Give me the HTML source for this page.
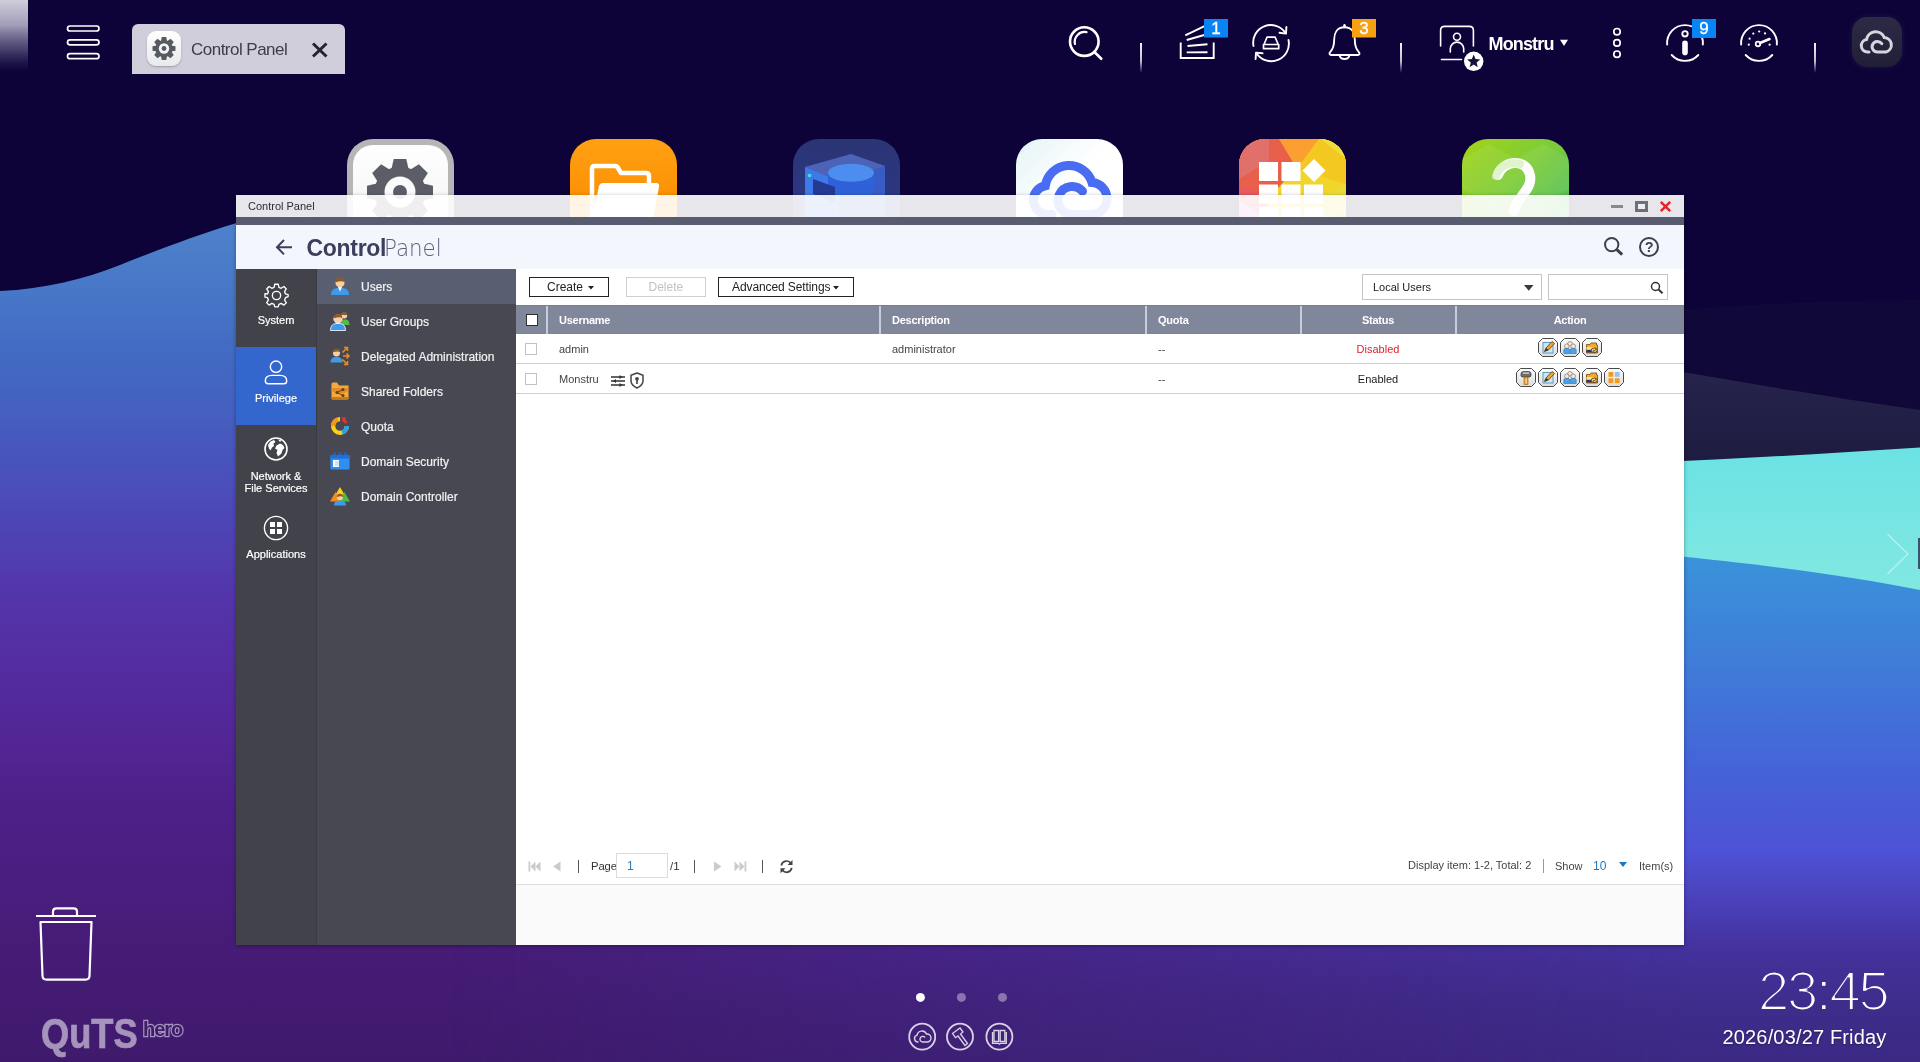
<!DOCTYPE html>
<html lang="en">
<head>
<meta charset="utf-8">
<title>Control Panel</title>
<style>
*{box-sizing:border-box;margin:0;padding:0}
html,body{width:1920px;height:1062px;overflow:hidden;background:#0d0338}
body{position:relative;will-change:transform;font-family:"Liberation Sans",sans-serif;color:#333;-webkit-font-smoothing:antialiased}
.abs{position:absolute}
.t{position:absolute;white-space:nowrap;line-height:1}
#bg{position:absolute;left:0;top:0;width:1920px;height:1062px}
/* ---------- top bar ---------- */
#tab{position:absolute;left:132px;top:24px;width:213px;height:50px;background:#d0cedb;border-radius:6px 6px 0 0}
#tabicon{position:absolute;left:15px;top:7px;width:34px;height:35px;border-radius:9px;background:linear-gradient(#ffffff,#e9e9ec);box-shadow:0 1px 2px rgba(0,0,0,.25)}
.sep{position:absolute;width:2px;height:30px;top:43px;background:linear-gradient(rgba(255,255,255,.95),rgba(255,255,255,.75) 60%,rgba(255,255,255,0))}
.badge{position:absolute;width:24px;height:19px;top:19px;color:#fff;font-size:14px;line-height:19px;text-align:center;-webkit-text-stroke:.35px #fff}
/* ---------- desktop icons ---------- */
.dicon{position:absolute;top:139px;width:107px;height:107px;border-radius:26px;overflow:hidden}
/* ---------- window ---------- */
#win{position:absolute;left:236px;top:195px;width:1448px;height:750px;box-shadow:0 1px 4px rgba(0,0,0,.35)}
#wtitle{position:absolute;left:0;top:0;width:1448px;height:22px;background:rgba(255,255,255,.9)}
#wband{position:absolute;left:0;top:22px;width:1448px;height:8px;background:#595b71}
#whead{position:absolute;left:0;top:30px;width:1448px;height:44px;background:#f3f6fd}
#side1{position:absolute;left:0;top:74px;width:80px;height:676px;background:#42424a}
#side1sep{position:absolute;left:80px;top:74px;width:1px;height:676px;background:#3a3a43}
#side2{position:absolute;left:81px;top:74px;width:199px;height:676px;background:#484852}
#main{position:absolute;left:280px;top:74px;width:1168px;height:676px;background:#fff}
.s1txt{position:absolute;left:0;width:80px;text-align:center;color:#fff;font-size:11px;line-height:12px;white-space:nowrap;-webkit-text-stroke:.2px #fff}
.s2item{position:absolute;left:0;width:199px;height:35px}
.s2item span{position:absolute;left:44px;top:11px;font-size:12px;line-height:14px;color:#f2f2f2;white-space:nowrap;-webkit-text-stroke:.2px #f2f2f2}
.s2item svg{position:absolute;left:13px;top:7px}
.btn{position:absolute;top:8px;height:20px;border:1px solid #222;font-size:12px;line-height:18px;color:#222;white-space:nowrap;background:#fff}
.th{position:absolute;top:-1px;height:29px;color:#fff;font-weight:bold;font-size:11px;line-height:31px;white-space:nowrap;letter-spacing:-.25px}
.thsep{position:absolute;top:0;width:2px;height:28px;background:#c6ccde}
.row{position:absolute;left:0;width:1168px;height:30px;border-bottom:1px solid #cfcfcf}
.cell{position:absolute;top:0;font-size:11px;line-height:31px;color:#444;white-space:nowrap}
.cb{position:absolute;width:12px;height:12px;border:1px solid #c0c0c0;background:#fff}
.ab{position:absolute;top:4px;width:20px;height:19px}
</style>
</head>
<body>
<svg id="bg" width="1920" height="1062" viewBox="0 0 1920 1062">
<defs>
<linearGradient id="gL" x1="0" y1="225" x2="0" y2="1062" gradientUnits="userSpaceOnUse">
<stop offset="0" stop-color="#4f81cb"/><stop offset=".08" stop-color="#4777c7"/><stop offset=".15" stop-color="#426bc3"/><stop offset=".22" stop-color="#4560c0"/><stop offset=".33" stop-color="#4c4ab9"/><stop offset=".45" stop-color="#5434a9"/><stop offset=".58" stop-color="#53289a"/><stop offset=".7" stop-color="#4d2088"/><stop offset=".85" stop-color="#471c78"/><stop offset="1" stop-color="#3f1a6c"/>
</linearGradient>
<linearGradient id="gR" x1="0" y1="557" x2="0" y2="1062" gradientUnits="userSpaceOnUse">
<stop offset="0" stop-color="#3a93da"/><stop offset=".12" stop-color="#3d86d9"/><stop offset=".3" stop-color="#4272d8"/><stop offset=".42" stop-color="#4563d8"/><stop offset=".58" stop-color="#4e52d6"/><stop offset=".68" stop-color="#4a41ba"/><stop offset=".78" stop-color="#44319c"/><stop offset=".88" stop-color="#3f2d8c"/><stop offset="1" stop-color="#3c2984"/>
</linearGradient>
<linearGradient id="gRm" x1="450" y1="0" x2="1690" y2="0" gradientUnits="userSpaceOnUse">
<stop offset="0" stop-color="#fff" stop-opacity="0"/><stop offset=".5" stop-color="#fff" stop-opacity=".5"/><stop offset="1" stop-color="#fff" stop-opacity="1"/>
</linearGradient>
<mask id="mR"><rect x="0" y="0" width="1920" height="1062" fill="url(#gRm)"/></mask>
<linearGradient id="gT" x1="0" y1="445" x2="0" y2="595" gradientUnits="userSpaceOnUse">
<stop offset="0" stop-color="#6be2e5"/><stop offset="1" stop-color="#82e8e1"/>
</linearGradient>
<linearGradient id="gD" x1="0" y1="370" x2="0" y2="465" gradientUnits="userSpaceOnUse">
<stop offset="0" stop-color="#27244d"/><stop offset="1" stop-color="#1e1b40"/>
</linearGradient>
<linearGradient id="gC" x1="0" y1="0" x2="0" y2="72" gradientUnits="userSpaceOnUse">
<stop offset="0" stop-color="#d0cddb"/><stop offset=".35" stop-color="#aaa6c0" stop-opacity=".95"/><stop offset=".7" stop-color="#6a668e" stop-opacity=".6"/><stop offset="1" stop-color="#3c3868" stop-opacity="0"/>
</linearGradient>
<linearGradient id="gTop" x1="0" y1="0" x2="0" y2="300" gradientUnits="userSpaceOnUse">
<stop offset="0" stop-color="#0d0638"/><stop offset="1" stop-color="#0e0439"/>
</linearGradient>
</defs>
<rect width="1920" height="1062" fill="#0d0338"/>
<path d="M1920,300 L1920,420 L1100,420 Q1500,300 1920,300Z" fill="#100839"/>
<!-- left wave + lower body -->
<path d="M0,291 C45,289 85,279 120,265 C155,251 200,234 236,223.300000 C270,213.500000 330,212 420,232 C800,330 1200,400 1920,420 L1920,1062 L0,1062Z" fill="url(#gL)"/>
<!-- right: dark band, teal, blue -->
<path d="M1300,300 C1500,340 1700,378 1920,410 L1920,600 L1300,600Z" fill="url(#gD)"/>
<path d="M1300,475 C1500,470 1700,462 1920,447.500000 L1920,593 C1690,548 1300,523 400,503Z" fill="url(#gT)"/>
<g mask="url(#mR)"><path d="M400,500 C1300,520 1690,545 1920,590 L1920,1062 L400,1062Z" fill="url(#gR)"/></g>
<rect x="0" y="0" width="28" height="72" fill="url(#gC)"/>
<!-- next arrow -->
<polyline points="1887.500000,534 1908,554 1887.500000,574" fill="none" stroke="#fff" stroke-opacity=".45" stroke-width="1.300000"/>
<rect x="1918" y="538" width="2" height="31" fill="#1a1440" fill-opacity=".7"/>
</svg>

<div id="tab"><div id="tabicon"><svg width="34" height="35" viewBox="0 0 34 35"><g transform="translate(17,17.5)" fill="#565a61"><path d="M-2.300000,-11.500000 L2.300000,-11.500000 L3,-7 L-3,-7Z"/><path d="M-2.300000,-11.500000 L2.300000,-11.500000 L3,-7 L-3,-7Z" transform="rotate(45)"/><path d="M-2.300000,-11.500000 L2.300000,-11.500000 L3,-7 L-3,-7Z" transform="rotate(90)"/><path d="M-2.300000,-11.500000 L2.300000,-11.500000 L3,-7 L-3,-7Z" transform="rotate(135)"/><path d="M-2.300000,-11.500000 L2.300000,-11.500000 L3,-7 L-3,-7Z" transform="rotate(180)"/><path d="M-2.300000,-11.500000 L2.300000,-11.500000 L3,-7 L-3,-7Z" transform="rotate(225)"/><path d="M-2.300000,-11.500000 L2.300000,-11.500000 L3,-7 L-3,-7Z" transform="rotate(270)"/><path d="M-2.300000,-11.500000 L2.300000,-11.500000 L3,-7 L-3,-7Z" transform="rotate(315)"/><circle r="8.600000"/><circle r="5.200000" fill="#f4f4f6"/><circle r="2.400000"/></g></svg></div>
<span class="t" style="left:59px;top:17px;font-size:17px;color:#3b3d49;letter-spacing:-.52px">Control Panel</span>
<svg class="abs" style="left:179px;top:17px" width="18" height="18" viewBox="0 0 18 18"><path d="M2,2.500000 L15.500000,15.500000 M15.500000,2.500000 L2,15.500000" stroke="#24242c" stroke-width="3" stroke-linecap="butt"/></svg>
</div>
<svg class="abs" style="left:0;top:0" width="1920" height="100" viewBox="0 0 1920 100" fill="none" stroke="#fff" stroke-linecap="round" stroke-linejoin="round">
<!-- hamburger -->
<g stroke-width="1.700000"><rect x="67.500000" y="26" width="31.500000" height="5" rx="2.500000"/><rect x="67.500000" y="39.800000" width="31.500000" height="5" rx="2.500000"/><rect x="67.500000" y="53.700000" width="31.500000" height="5" rx="2.500000"/></g>
<!-- search -->
<g stroke-width="2.600000"><circle cx="1084.300000" cy="41.600000" r="14.300000"/><path d="M1094.700000,52.300000 L1101.300000,58.800000"/><path d="M1075,44 A9.800000,9.800000 0 0 1 1086.500000,32.200000" stroke-width="2.200000"/></g>
<!-- tasks -->
<g stroke-width="1.900000" stroke-linecap="butt" stroke-linejoin="miter"><path d="M1180.700000,42.500000 V58 H1213.700000 V42.500000"/><path d="M1186.700000,52.400000 L1207.500000,52.200000 M1187.500000,46 L1207.500000,44.200000 M1186.700000,40 L1206,34.500000 M1185.300000,35.300000 L1205,25.800000"/></g>
<rect x="1204" y="19" width="24" height="18.500000" fill="#0a84f4" stroke="none"/>
<!-- sync -->
<g stroke-width="1.900000"><path d="M1253.500000,46 A17.600000,17.600000 0 0 1 1285.500000,33"/><path d="M1279.500000,32.800000 L1286,33.600000 L1286.400000,27"/><path d="M1288.500000,40 A17.600000,17.600000 0 0 1 1256.500000,53.200000"/><path d="M1262.500000,53.300000 L1256,52.600000 L1255.600000,59"/><path d="M1264,44.500000 L1267,37.200000 H1275.200000 L1278.200000,44.500000 M1263.500000,44.500000 H1278.700000 V48.700000 H1263.500000Z" stroke-width="1.700000"/></g>
<!-- bell -->
<g stroke-width="1.900000"><path d="M1344.500000,27.300000 C1337,27.300000 1334.200000,33 1334.200000,39.500000 C1334.200000,47 1332.500000,49.800000 1330,52.300000 C1329,53.500000 1329.600000,55 1331.200000,55 L1357.800000,55 C1359.400000,55 1360,53.500000 1359,52.300000 C1356.500000,49.800000 1354.800000,47 1354.800000,39.500000 C1354.800000,33 1352,27.300000 1344.500000,27.300000Z"/><path d="M1339.600000,55.500000 A5,4.300000 0 0 0 1349.400000,55.500000"/><path d="M1344.500000,27 V25.200000" stroke-width="2.400000"/></g>
<rect x="1352" y="19" width="24" height="18.500000" fill="#f7a111" stroke="none"/>
<!-- user -->
<g stroke-width="1.600000"><path d="M1440.600000,46 V30.500000 Q1440.600000,26.400000 1444.700000,26.400000 H1469.300000 Q1473.400000,26.400000 1473.400000,30.500000 V46"/><path d="M1441.500000,59.500000 H1461.500000"/><circle cx="1457" cy="36.700000" r="3.500000"/><path d="M1450.300000,52 V48.800000 A6.700000,6.700000 0 0 1 1463.700000,48.800000 V52"/></g>
<circle cx="1473.700000" cy="61.300000" r="9.700000" fill="#fff" stroke="none"/>
<path d="M1473.700000,54.600000 L1475.500000,59 L1480.300000,59.400000 L1476.600000,62.500000 L1477.800000,67.200000 L1473.700000,64.600000 L1469.600000,67.200000 L1470.800000,62.500000 L1467.100000,59.400000 L1471.900000,59Z" fill="#17123c" stroke="none"/>
<path d="M1560,39.700000 H1568 L1564,45.900000Z" fill="#fff" stroke="none"/>
<!-- dots -->
<g stroke-width="1.700000"><circle cx="1617" cy="31.700000" r="3.200000"/><circle cx="1617" cy="42.900000" r="3.200000"/><circle cx="1617" cy="54.200000" r="3.200000"/></g>
<!-- info -->
<g stroke-width="1.900000"><path d="M1667.160000,44.500000 A17.900000,17.900000 0 1 1 1702.840000,44.500000"/><path d="M1671.700000,55 A17.900000,17.900000 0 0 0 1698.300000,55"/><circle cx="1685" cy="33.800000" r="2.700000" stroke-width="1.900000"/><rect x="1682.200000" y="40.600000" width="5.600000" height="14.600000" rx="2.800000" fill="#fff" stroke="none"/></g>
<rect x="1692" y="19" width="24" height="19" fill="#0a84f4" stroke="none"/>
<!-- gauge -->
<g stroke-width="1.900000"><path d="M1741.160000,44.500000 A17.900000,17.900000 0 1 1 1776.840000,44.500000"/><path d="M1745.700000,55 A17.900000,17.900000 0 0 0 1772.300000,55"/><circle cx="1758" cy="44" r="2.300000" stroke-width="1.700000"/><path d="M1760,43 L1769.500000,39" stroke-width="2.600000"/></g>
<g fill="#fff" stroke="none"><circle cx="1748.800000" cy="44.700000" r="1.100000"/><circle cx="1749.600000" cy="38.700000" r="1.100000"/><circle cx="1753.300000" cy="33.600000" r="1.100000"/><circle cx="1759.200000" cy="31.500000" r="1.100000"/><circle cx="1765" cy="33.400000" r="1.100000"/><circle cx="1769.600000" cy="44.700000" r="1.100000"/></g>
</svg>
<span class="badge" style="left:1204px;font-size:17px">1</span>
<span class="badge" style="left:1352px;font-size:17px">3</span>
<span class="badge" style="left:1692px;font-size:17px">9</span>
<div class="sep" style="left:1140px"></div><div class="sep" style="left:1400px"></div><div class="sep" style="left:1814px"></div>
<span class="t" style="left:1488.5px;top:34.5px;font-size:18px;font-weight:bold;color:#fff;letter-spacing:-.85px">Monstru</span>
<div class="abs" style="left:1852px;top:17px;width:50px;height:50px;border-radius:15px;background:linear-gradient(#2d2a45,#211e38);box-shadow:0 0 6px rgba(60,55,95,.35)"><svg width="50" height="50" viewBox="0 0 50 50" fill="none" stroke="#d6d5de" stroke-width="3" stroke-linecap="round"><path d="M17,35 H15.500000 A6.300000,6.300000 0 0 1 14.500000,22.500000 A9.300000,9.300000 0 0 1 32.300000,20.500000 A7.400000,7.400000 0 0 1 34,35 H25.500000 A5.300000,5.300000 0 1 1 29.800000,26.700000"/></svg></div>

<!-- Control Panel icon -->
<div class="dicon" style="left:347px;background:#b6b6b6"><div class="abs" style="left:6px;top:6px;width:95px;height:95px;border-radius:20px;background:linear-gradient(#ffffff,#f1f1f2)"></div>
<svg class="abs" style="left:0;top:0" width="107" height="107" viewBox="0 0 107 107"><g transform="translate(53,53)" fill="#5b5e67"><path d="M-6.300000,-33 L6.300000,-33 L9,-21 L-9,-21Z"/><path d="M-6.300000,-33 L6.300000,-33 L9,-21 L-9,-21Z" transform="rotate(45)"/><path d="M-6.300000,-33 L6.300000,-33 L9,-21 L-9,-21Z" transform="rotate(90)"/><path d="M-6.300000,-33 L6.300000,-33 L9,-21 L-9,-21Z" transform="rotate(135)"/><path d="M-6.300000,-33 L6.300000,-33 L9,-21 L-9,-21Z" transform="rotate(180)"/><path d="M-6.300000,-33 L6.300000,-33 L9,-21 L-9,-21Z" transform="rotate(225)"/><path d="M-6.300000,-33 L6.300000,-33 L9,-21 L-9,-21Z" transform="rotate(270)"/><path d="M-6.300000,-33 L6.300000,-33 L9,-21 L-9,-21Z" transform="rotate(315)"/><circle r="25.500000"/><circle r="15.500000" fill="#fafafa"/><circle r="7"/></g></svg></div>
<!-- File Station -->
<div class="dicon" style="left:570px;background:linear-gradient(#ffa012,#fb8d02 70%,#f68400)">
<svg class="abs" style="left:0;top:0" width="107" height="107" viewBox="0 0 107 107"><path d="M22,78 V30 Q22,27 25,27 H45 Q47,27 48,29 L51,34 H76 Q79,34 79,37 V44" fill="none" stroke="#fff" stroke-width="4.500000" stroke-linejoin="round"/><path d="M33,44 H86 Q90,44 89,48 L83,80 Q82,83 79,83 H24 Q21,83 22,80 L29,47 Q30,44 33,44Z" fill="#fff"/></svg></div>
<!-- Storage -->
<div class="dicon" style="left:793px;background:linear-gradient(#2b3474,#2a3a8e)">
<svg class="abs" style="left:0;top:0" width="107" height="107" viewBox="0 0 107 107"><path d="M12,28 L58,15 L92,27 L92,90 L46,100 L12,88Z" fill="#4a6bd0" fill-opacity=".45"/><path d="M12,28 L46,42 L46,100 L12,88Z" fill="#3f78e8"/><path d="M46,42 L92,27 L92,90 L46,100Z" fill="#3a5fd0" fill-opacity=".8"/><path d="M12,28 L58,15 L92,27 L46,42Z" fill="#6d84d8" fill-opacity=".4"/><ellipse cx="58" cy="50" rx="23" ry="9.500000" fill="#2f62d8"/><rect x="35" y="34" width="46" height="16" fill="#2f62d8"/><ellipse cx="58" cy="33.800000" rx="23" ry="9" fill="#4d8df0"/><path d="M20,40 L42,48 L42,64 L20,55Z" fill="#243a90"/><circle cx="16.500000" cy="36.500000" r="1.800000" fill="#3fe8d0"/></svg></div>
<!-- myQNAPcloud -->
<div class="dicon" style="left:1016px;background:linear-gradient(135deg,#e4f4f6,#ffffff 45%,#ffffff)">
<svg class="abs" style="left:0;top:0" width="107" height="107" viewBox="0 0 107 107" fill="none" stroke="#4a6cf2" stroke-width="9" stroke-linecap="round"><path d="M36,75.500000 H32 A14.500000,14.500000 0 0 1 29.300000,46.750000 A24,24 0 0 1 75.970000,43.530000 A16,16 0 0 1 75,75.500000 H56 A14,14 0 1 1 66.500000,52.200000"/></svg></div>
<!-- App Center -->
<div class="dicon" style="left:1239px;background:#f0d628">
<svg class="abs" style="left:0;top:0" width="107" height="107" viewBox="0 0 107 107"><rect width="107" height="107" fill="#f2d52a"/><path d="M0,0 H40 L62,22 L30,60 L0,50Z" fill="#e8604c"/><path d="M0,0 H30 L30,22 L0,40Z" fill="#e2706a"/><path d="M40,0 H80 L58,30Z" fill="#fba030"/><path d="M80,0 H107 V45 L58,30Z" fill="#f3c820"/><path d="M82,0 H107 V20Z" fill="#eede3c"/><path d="M0,45 L30,60 L20,107 H0Z" fill="#e85a60"/><path d="M0,62 L22,75 L18,107 H0Z" fill="#e07ad0"/><path d="M80,60 L107,45 V107 H75Z" fill="#e8dc3a"/><path d="M90,80 L107,70 V107 H85Z" fill="#b8d850"/>
<g fill="#fff"><rect x="20" y="23" width="19" height="19"/><rect x="42.500000" y="23" width="19" height="19"/><rect x="20" y="45.500000" width="19" height="19"/><rect x="42.500000" y="45.500000" width="19" height="19"/><rect x="65" y="45.500000" width="19" height="19"/><rect x="20" y="68" width="19" height="19"/><rect x="42.500000" y="68" width="19" height="19"/><rect x="65" y="68" width="19" height="19"/><path d="M75,20 L86.500000,31.500000 L75,43 L63.500000,31.500000Z"/></g></svg></div>
<!-- Help -->
<div class="dicon" style="left:1462px;background:linear-gradient(135deg,#a4d418,#7ccc38 45%,#3cb86c)">
<svg class="abs" style="left:0;top:0" width="107" height="107" viewBox="0 0 107 107"><g fill="#fff" fill-opacity=".07"><path d="M0,20 L27,5 L54,20 L54,50 L27,65 L0,50Z"/><path d="M54,20 L81,5 L107,20 L107,50 L81,65 L54,50Z"/><path d="M27,65 L54,50 L81,65 L81,95 L54,107 L27,95Z"/></g><path d="M36,36 C40,22 64,18 68,36 C71,50 56,56 52,72" fill="none" stroke="#fff" stroke-width="10" stroke-linecap="round"/><path d="M34,37 C37,26 50,22 58,25" fill="none" stroke="#d8f0c0" stroke-width="8" stroke-linecap="round" stroke-opacity=".8"/></svg></div>

<div id="win">
<div id="wtitle"></div><div id="wband"></div><div id="whead"></div>
<span class="t" style="left:12px;top:6px;font-size:11px;color:#2b2b33">Control Panel</span>
<div class="abs" style="left:1375px;top:10px;width:12px;height:3px;background:#85888d"></div>
<div class="abs" style="left:1399px;top:6px;width:13px;height:11px;border:3px solid #6c7078;border-top-width:3px;background:rgba(255,255,255,.35)"></div>
<svg class="abs" style="left:1423px;top:5px" width="13" height="13" viewBox="0 0 13 13"><path d="M1.800000,1.800000 L11.200000,11.200000 M11.200000,1.800000 L1.800000,11.200000" stroke="#e8222b" stroke-width="2.500000"/></svg>
<!-- header -->
<svg class="abs" style="left:38px;top:42px" width="20" height="20" viewBox="0 0 20 20" fill="none" stroke="#3c3f5c" stroke-width="2"><path d="M18,10.200000 H3.500000 M10,3 L3,10.200000 L10,17.400000"/></svg>
<span class="t" id="hctl" style="left:70.5px;top:42px;font-size:23px;font-weight:bold;color:#3c3f5c;letter-spacing:-.3px">Control</span>
<span class="t" id="hpan" style="left:148px;top:42px;font-family:'DejaVu Sans','Liberation Sans',sans-serif;font-weight:200;font-size:23px;color:#5c5f78;transform:scaleX(.93);transform-origin:0 0">Panel</span>
<svg class="abs" style="left:1366px;top:40px" width="24" height="22" viewBox="0 0 24 22" fill="none" stroke="#3d4048"><circle cx="9.700000" cy="9.600000" r="6.700000" stroke-width="2"/><path d="M14.800000,14.600000 L20.200000,19.600000" stroke-width="3"/></svg>
<div class="abs" style="left:1403px;top:42px;width:20px;height:20px;border:2px solid #3d4048;border-radius:50%"></div>
<span class="t" style="left:1408.8px;top:45px;font-size:14.500000px;font-weight:bold;color:#3d4048">?</span>
<!-- sidebars -->
<div id="side1">
<div class="abs" style="left:0;top:78px;width:80px;height:78px;background:#3367cd"></div>
<svg class="abs" style="left:27.5px;top:13.5px" width="25" height="25" viewBox="0 0 26 26" fill="none" stroke="#fff" stroke-width="1.400000" stroke-linejoin="round"><path d="M11.200000,1.500000 H14.800000 L15.500000,4.700000 L17.900000,5.700000 L20.700000,3.900000 L23.200000,6.400000 L21.400000,9.200000 L22.400000,11.600000 L25.100000,12.300000 V14.300000 L22.400000,15.500000 L21.400000,17.900000 L23.200000,20.700000 L20.700000,23.200000 L17.900000,21.400000 L15.500000,22.400000 L14.800000,25 H11.200000 L10.500000,22.400000 L8.100000,21.400000 L5.300000,23.200000 L2.800000,20.700000 L4.600000,17.900000 L3.600000,15.500000 L1,14.800000 V11.200000 L3.600000,11.600000 L4.600000,9.200000 L2.800000,6.400000 L5.300000,3.900000 L8.100000,5.700000 L10.500000,4.700000Z" transform="translate(0,-.2)"/><circle cx="13" cy="13" r="4.300000"/></svg>
<span class="s1txt" style="top:45px">System</span>
<svg class="abs" style="left:28px;top:91px" width="24" height="25" viewBox="0 0 24 25" fill="none" stroke="#fff" stroke-width="1.400000"><circle cx="12" cy="6.700000" r="5.700000"/><path d="M8,15.400000 H16 Q22.700000,15.400000 22.700000,21 Q22.700000,23.800000 19.800000,23.800000 H4.200000 Q1.300000,23.800000 1.300000,21 Q1.300000,15.400000 8,15.400000Z"/></svg>
<span class="s1txt" style="top:123px">Privilege</span>
<svg class="abs" style="left:28px;top:168px" width="24" height="24" viewBox="0 0 24 24"><circle cx="12" cy="12" r="11" fill="none" stroke="#fff" stroke-width="1.600000"/><path d="M6.500000,4.500000 L10,3 L11.500000,5 L9.500000,6.500000 L10,9 L8,10.500000 L6.500000,13.500000 L5,11.500000 L4,8 Z M12.500000,8.500000 L16,6.500000 L19,8 L20.500000,11 L18.500000,13 L17.500000,16.500000 L14,19.500000 L12.500000,16 L13.500000,13 L11,11.500000Z M14,2.500000 L17.500000,3.500000 L16,5 Z" fill="#fff"/></svg>
<span class="s1txt" style="top:201px">Network &amp;<br>File Services</span>
<svg class="abs" style="left:27px;top:246px" width="26" height="26" viewBox="0 0 26 26"><circle cx="13" cy="13" r="11.600000" fill="none" stroke="#fff" stroke-width="1.400000"/><g fill="#fff"><rect x="7" y="7" width="5" height="5"/><rect x="14" y="7" width="5" height="5"/><rect x="7" y="14" width="5" height="5"/><rect x="14" y="14" width="5" height="5"/></g></svg>
<span class="s1txt" style="top:279px">Applications</span>
</div>
<div id="side1sep"></div>
<div id="side2">
<div class="s2item" style="top:0;background:#585f70"><svg width="20" height="20" viewBox="0 0 20 20"><path d="M1,19 Q1,12.500000 7,12 H13 Q19,12.500000 19,19Z" fill="#3f9bea"/><path d="M8,11 H12 L10,15.500000Z" fill="#fff"/><circle cx="10" cy="6.800000" r="4.600000" fill="#f6cfa5"/><path d="M5.200000,6.500000 Q5,1.500000 10,1.500000 Q15,1.500000 14.800000,6.500000 Q12,3.800000 5.200000,6.500000Z" fill="#8b5a2b"/></svg><span>Users</span></div>
<div class="s2item" style="top:35px"><svg width="20" height="20" viewBox="0 0 20 20"><circle cx="14.300000" cy="4.500000" r="2.900000" fill="#f6cfa5"/><path d="M11.300000,4 Q11.500000,1 14.300000,1 Q17.200000,1 17.300000,4Z" fill="#8b5a2b"/><path d="M11,14 Q11,8.500000 15,8.300000 Q19.500000,8.500000 19.500000,14Z" fill="#57b947"/><path d="M.5,19.500000 Q.5,13 6,12.500000 H10 Q15.500000,13 15.500000,19.500000Z" fill="#3f9bea" stroke="#fff" stroke-width=".8"/><circle cx="8" cy="7.800000" r="4.200000" fill="#f6cfa5" stroke="#fff" stroke-width=".8"/><path d="M3.700000,7.400000 Q3.600000,3 8,3 Q12.400000,3 12.300000,7.400000 Q10,5 3.700000,7.400000Z" fill="#8b5a2b"/></svg><span>User Groups</span></div>
<div class="s2item" style="top:70px"><svg width="20" height="20" viewBox="0 0 20 20"><path d="M.5,16.500000 Q.5,11.500000 5,11 H8 Q12.500000,11.500000 12.500000,16.500000Z" fill="#3f9bea"/><circle cx="6.500000" cy="6.800000" r="3.600000" fill="#f6cfa5"/><path d="M2.800000,6.500000 Q2.700000,2.700000 6.500000,2.700000 Q10.300000,2.700000 10.200000,6.500000 Q8,4.500000 2.800000,6.500000Z" fill="#8b5a2b"/><g stroke="#f28a1e" stroke-width="1.500000" fill="none"><path d="M12.500000,6.500000 L17,2 M14,1.500000 H17.500000 V5"/><path d="M13,10 H19 M16.500000,7.500000 L19,10 L16.500000,12.500000"/><path d="M12.500000,13.500000 L17,18 M14,18.500000 H17.500000 V15"/></g></svg><span>Delegated Administration</span></div>
<div class="s2item" style="top:105px"><svg width="20" height="20" viewBox="0 0 20 20"><path d="M1.500000,3 Q1.500000,1.500000 3,1.500000 H7 L9,4.500000 H18.500000 V17 Q18.500000,18.500000 17,18.500000 H3 Q1.500000,18.500000 1.500000,17Z" fill="#f6a93b"/><path d="M1.500000,7 H18.500000 V10 Q14,12.500000 10,12.500000 Q6,12.500000 1.500000,10Z" fill="#e08e26"/><rect x="1.500000" y="16" width="17" height="2.500000" rx="1" fill="#c47a1e"/><g fill="#6b3d12"><circle cx="7" cy="11.500000" r="1.500000"/><circle cx="13" cy="8.500000" r="1.500000"/><circle cx="13" cy="14.500000" r="1.500000"/></g><path d="M7,11.500000 L13,8.500000 M7,11.500000 L13,14.500000" stroke="#6b3d12" stroke-width="1"/></svg><span>Shared Folders</span></div>
<div class="s2item" style="top:140px"><svg width="20" height="20" viewBox="0 0 20 20" fill="none" stroke-width="4.200000"><path d="M10,3.100000 A6.900000,6.900000 0 1 0 16.900000,10" stroke="#fdd114"/><path d="M3.100000,10 A6.900000,6.900000 0 0 1 8,3.400000" stroke="#f7941d"/><path d="M16.900000,10 A6.900000,6.900000 0 0 1 12,16.600000" stroke="#29a3e8"/><path d="M11,1 L16,1.500000 L15.500000,6.500000Z" fill="#e5322d" stroke="none"/><path d="M12.500000,3.500000 A6.900000,6.900000 0 0 1 16.300000,7" stroke="#e5322d" stroke-width="3"/></svg><span>Quota</span></div>
<div class="s2item" style="top:175px"><svg width="20" height="20" viewBox="0 0 20 20"><rect x="3" y="1.500000" width="3" height="4" fill="#1d62c4"/><rect x="8.500000" y="1.500000" width="3" height="4" fill="#1d62c4"/><rect x="14" y="1.500000" width="3" height="4" fill="#1d62c4"/><rect x=".5" y="4" width="19" height="14.500000" rx="1.200000" fill="#2f8ff2"/><rect x=".5" y="4" width="19" height="3.500000" fill="#1f6fd6"/><rect x="3" y="9" width="6" height="7" fill="#fff"/><rect x="5" y="10" width="4" height="5" fill="#cfe4fb"/></svg><span>Domain Security</span></div>
<div class="s2item" style="top:210px"><svg width="20" height="20" viewBox="0 0 20 20"><path d="M10,1 L15,9.500000 H5Z" fill="#fdd114"/><path d="M5.500000,6 L11,15.500000 H0Z" fill="#f58a1f"/><path d="M14.500000,6 L20,15.500000 H9Z" fill="#4dbb3c"/><path d="M4,19.500000 Q4,15 8,14.700000 H12 Q16,15 16,19.500000Z" fill="#3f9bea"/><circle cx="10" cy="11.200000" r="3" fill="#f6cfa5"/><path d="M6.900000,11 Q6.900000,7.800000 10,7.800000 Q13.100000,7.800000 13.100000,11 Q11,9.300000 6.900000,11Z" fill="#8b5a2b"/></svg><span>Domain Controller</span></div>
</div>
<div id="main">
<svg width="0" height="0" style="position:absolute"><defs>

<linearGradient id="octg" x1="0" y1="0" x2="0" y2="1"><stop offset="0" stop-color="#fbfbfb"/><stop offset="1" stop-color="#dcdcdc"/></linearGradient>
</defs></svg>
<!-- toolbar -->
<div class="btn" style="left:13px;width:80px"><span class="t" style="left:17px;top:3px">Create</span><svg class="abs" style="left:58px;top:8px" width="6" height="4"><path d="M0,0 H6 L3,3.500000Z" fill="#222"/></svg></div>
<div class="btn" style="left:110px;width:80px;border-color:#cfcfcf;color:#c2c2c2"><span class="t" style="left:21.5px;top:3px">Delete</span></div>
<div class="btn" style="left:202px;width:136px"><span class="t" style="left:13px;top:3px;letter-spacing:-.1px">Advanced Settings</span><svg class="abs" style="left:114px;top:8px" width="6" height="4"><path d="M0,0 H6 L3,3.500000Z" fill="#222"/></svg></div>
<div class="abs" style="left:846px;top:5px;width:180px;height:26px;border:1px solid #c4c4c4;background:#fff"><span class="t" style="left:10px;top:7px;font-size:11px;color:#222">Local Users</span><svg class="abs" style="left:161px;top:10px" width="10" height="6"><path d="M0,0 H9.500000 L4.750000,5.800000Z" fill="#3a3a3a"/></svg></div>
<div class="abs" style="left:1032px;top:5px;width:120px;height:26px;border:1px solid #c4c4c4;background:#fff"><svg class="abs" style="left:101px;top:6px" width="14" height="14" viewBox="0 0 14 14" fill="none" stroke="#333"><circle cx="5.500000" cy="5.500000" r="4" stroke-width="1.500000"/><path d="M8.500000,8.500000 L12.500000,12.300000" stroke-width="2"/></svg></div>
<!-- table header -->
<div class="abs" style="left:0;top:36px;width:1168px;height:29px;background:#80879a;border-top:1px solid #7b8088">
<div class="cb" style="left:10px;top:8px;width:12px;height:12px;border:1px solid #2e2e2e"></div>
<div class="thsep" style="left:30px"></div><span class="th" style="left:43px">Username</span>
<div class="thsep" style="left:363px"></div><span class="th" style="left:376px">Description</span>
<div class="thsep" style="left:629px"></div><span class="th" style="left:642px">Quota</span>
<div class="thsep" style="left:784px"></div><span class="th" style="left:785px;width:154px;text-align:center">Status</span>
<div class="thsep" style="left:939px"></div><span class="th" style="left:940px;width:228px;text-align:center">Action</span>
</div>
<!-- rows -->
<div class="row" style="top:65px"><div class="cb" style="left:9px;top:9px"></div><span class="cell" style="left:43px">admin</span><span class="cell" style="left:376px">administrator</span><span class="cell" style="left:642px">--</span><span class="cell" style="left:785px;width:154px;text-align:center;color:#e0202a">Disabled</span>
<svg class="ab" style="left:1022px" viewBox="0 0 20 19"><g><path d="M4.500000,.5 H15.500000 L19.500000,4.500000 V14.500000 L15.500000,18.500000 H4.500000 L.5,14.500000 V4.500000Z" fill="url(#octg)" stroke="#4a4a4a" stroke-width="1"/><rect x="5" y="4.500000" width="10" height="10.500000" fill="#cfe6f6" stroke="#5a9cc8" stroke-width="1"/><path d="M6.500000,13.500000 L8,10 L14,3.500000 L16.500000,5.500000 L10.500000,12Z" fill="#f3a32a" stroke="#5a3a10" stroke-width=".8"/><path d="M6.500000,13.500000 L8,10 L10.500000,12Z" fill="#333"/></g></svg><svg class="ab" style="left:1044px" viewBox="0 0 20 19"><g><path d="M4.500000,.5 H15.500000 L19.500000,4.500000 V14.500000 L15.500000,18.500000 H4.500000 L.5,14.500000 V4.500000Z" fill="url(#octg)" stroke="#4a4a4a" stroke-width="1"/><circle cx="10" cy="5.800000" r="2.300000" fill="#fbe8d2" stroke="#777" stroke-width=".7"/><circle cx="6.800000" cy="8.200000" r="2.300000" fill="#fbe8d2" stroke="#777" stroke-width=".7"/><circle cx="13.200000" cy="8.200000" r="2.300000" fill="#fbe8d2" stroke="#777" stroke-width=".7"/><path d="M3.800000,15.500000 V12 Q3.800000,10.500000 5.500000,10.500000 H8 Q9.700000,10.500000 9.700000,12 V15.500000Z" fill="#4aa3ea" stroke="#2a6db0" stroke-width=".6"/><path d="M10.300000,15.500000 V12 Q10.300000,10.500000 12,10.500000 H14.500000 Q16.200000,10.500000 16.200000,12 V15.500000Z" fill="#4aa3ea" stroke="#2a6db0" stroke-width=".6"/></g></svg><svg class="ab" style="left:1066px" viewBox="0 0 20 19"><g><path d="M4.500000,.5 H15.500000 L19.500000,4.500000 V14.500000 L15.500000,18.500000 H4.500000 L.5,14.500000 V4.500000Z" fill="url(#octg)" stroke="#4a4a4a" stroke-width="1"/><path d="M4.500000,6.500000 H8 L9,5 H14.500000 V7 H15.500000 V15 H4.500000Z" fill="#f6a82c" stroke="#7a4a0c" stroke-width=".8"/><path d="M4.500000,9 H12 V11.500000 H4.500000Z" fill="#fde27a"/><path d="M4.500000,12 H10 V14.500000 H4.500000Z" fill="#24357a"/><ellipse cx="12.200000" cy="12.300000" rx="3" ry="2.300000" fill="#f8d77a" stroke="#3a2a10" stroke-width=".8"/><path d="M10.800000,12.300000 L12,13.400000 L13.800000,11.300000" fill="none" stroke="#222" stroke-width=".9"/></g></svg></div>
<div class="row" style="top:95px"><div class="cb" style="left:9px;top:9px"></div><span class="cell" style="left:43px">Monstru</span>
<svg class="abs" style="left:94px;top:11px" width="16" height="12" viewBox="0 0 16 12" fill="none" stroke="#333" stroke-width="1.300000"><path d="M1,2 H15 M1,6 H15 M1,10 H15"/><g fill="#333" stroke="none"><path d="M9.500000,0 L12.500000,2 L9.500000,4Z"/><path d="M6,4 L3,6 L6,8Z"/><path d="M9.500000,8 L12.500000,10 L9.500000,12Z"/></g></svg>
<svg class="abs" style="left:113px;top:8px" width="16" height="17" viewBox="0 0 16 17"><path d="M8,1 L14,3.200000 V9 Q14,13 8,16 Q2,13 2,9 V3.200000Z" fill="none" stroke="#444" stroke-width="1.500000" stroke-linejoin="round"/><circle cx="8" cy="6.800000" r="1.900000" fill="#444"/><rect x="7.200000" y="7.500000" width="1.600000" height="4.500000" fill="#444"/></svg>
<span class="cell" style="left:642px">--</span><span class="cell" style="left:785px;width:154px;text-align:center;color:#222">Enabled</span>
<svg class="ab" style="left:1000px" viewBox="0 0 20 19"><g><path d="M4.500000,.5 H15.500000 L19.500000,4.500000 V14.500000 L15.500000,18.500000 H4.500000 L.5,14.500000 V4.500000Z" fill="url(#octg)" stroke="#4a4a4a" stroke-width="1"/><path d="M5,6 Q5,3.500000 7.500000,3.500000 H12.500000 Q15,3.500000 15,6 V7.500000 Q15,9 13,9 H7 Q5,9 5,7.500000Z" fill="#6e6e6e" stroke="#333" stroke-width=".7"/><rect x="6.500000" y="4.300000" width="7" height="1.600000" rx=".8" fill="#bdbdbd"/><rect x="8" y="9" width="4" height="7.500000" fill="#f39a1e" stroke="#a35a08" stroke-width=".6"/><path d="M9.500000,10.500000 H10.700000 V15.500000 H9.500000Z" fill="#fbe3b2"/></g></svg><svg class="ab" style="left:1022px" viewBox="0 0 20 19"><g><path d="M4.500000,.5 H15.500000 L19.500000,4.500000 V14.500000 L15.500000,18.500000 H4.500000 L.5,14.500000 V4.500000Z" fill="url(#octg)" stroke="#4a4a4a" stroke-width="1"/><rect x="5" y="4.500000" width="10" height="10.500000" fill="#cfe6f6" stroke="#5a9cc8" stroke-width="1"/><path d="M6.500000,13.500000 L8,10 L14,3.500000 L16.500000,5.500000 L10.500000,12Z" fill="#f3a32a" stroke="#5a3a10" stroke-width=".8"/><path d="M6.500000,13.500000 L8,10 L10.500000,12Z" fill="#333"/></g></svg><svg class="ab" style="left:1044px" viewBox="0 0 20 19"><g><path d="M4.500000,.5 H15.500000 L19.500000,4.500000 V14.500000 L15.500000,18.500000 H4.500000 L.5,14.500000 V4.500000Z" fill="url(#octg)" stroke="#4a4a4a" stroke-width="1"/><circle cx="10" cy="5.800000" r="2.300000" fill="#fbe8d2" stroke="#777" stroke-width=".7"/><circle cx="6.800000" cy="8.200000" r="2.300000" fill="#fbe8d2" stroke="#777" stroke-width=".7"/><circle cx="13.200000" cy="8.200000" r="2.300000" fill="#fbe8d2" stroke="#777" stroke-width=".7"/><path d="M3.800000,15.500000 V12 Q3.800000,10.500000 5.500000,10.500000 H8 Q9.700000,10.500000 9.700000,12 V15.500000Z" fill="#4aa3ea" stroke="#2a6db0" stroke-width=".6"/><path d="M10.300000,15.500000 V12 Q10.300000,10.500000 12,10.500000 H14.500000 Q16.200000,10.500000 16.200000,12 V15.500000Z" fill="#4aa3ea" stroke="#2a6db0" stroke-width=".6"/></g></svg><svg class="ab" style="left:1066px" viewBox="0 0 20 19"><g><path d="M4.500000,.5 H15.500000 L19.500000,4.500000 V14.500000 L15.500000,18.500000 H4.500000 L.5,14.500000 V4.500000Z" fill="url(#octg)" stroke="#4a4a4a" stroke-width="1"/><path d="M4.500000,6.500000 H8 L9,5 H14.500000 V7 H15.500000 V15 H4.500000Z" fill="#f6a82c" stroke="#7a4a0c" stroke-width=".8"/><path d="M4.500000,9 H12 V11.500000 H4.500000Z" fill="#fde27a"/><path d="M4.500000,12 H10 V14.500000 H4.500000Z" fill="#24357a"/><ellipse cx="12.200000" cy="12.300000" rx="3" ry="2.300000" fill="#f8d77a" stroke="#3a2a10" stroke-width=".8"/><path d="M10.800000,12.300000 L12,13.400000 L13.800000,11.300000" fill="none" stroke="#222" stroke-width=".9"/></g></svg><svg class="ab" style="left:1088px" viewBox="0 0 20 19"><g><path d="M4.500000,.5 H15.500000 L19.500000,4.500000 V14.500000 L15.500000,18.500000 H4.500000 L.5,14.500000 V4.500000Z" fill="url(#octg)" stroke="#4a4a4a" stroke-width="1"/><rect x="4.500000" y="4" width="4.800000" height="4.800000" fill="#f39a1e"/><rect x="10.800000" y="4" width="4.800000" height="4.800000" fill="#8ec5f3"/><rect x="4.500000" y="10.300000" width="4.800000" height="4.800000" fill="#f39a1e"/><rect x="10.800000" y="10.300000" width="4.800000" height="4.800000" fill="#f39a1e"/></g></svg></div>
<!-- paging -->
<svg class="abs" style="left:0;top:585px" width="300" height="30" viewBox="0 0 300 30"><g fill="#cbcbcb"><rect x="12.500000" y="7.500000" width="1.800000" height="10"/><path d="M19.500000,7.500000 V17.500000 L14.500000,12.500000Z"/><path d="M24.500000,7.500000 V17.500000 L19.500000,12.500000Z"/><path d="M44.500000,7.500000 V17.500000 L37,12.500000Z"/><path d="M198,7.500000 V17.500000 L205.500000,12.500000Z"/><path d="M218.500000,7.500000 V17.500000 L223.500000,12.500000Z"/><path d="M223.500000,7.500000 V17.500000 L228.500000,12.500000Z"/><rect x="228.500000" y="7.500000" width="1.800000" height="10"/></g><g fill="#555"><rect x="62" y="6" width="1" height="13"/><rect x="178" y="6" width="1" height="13"/><rect x="246" y="6" width="1" height="13"/></g><g fill="none" stroke="#444" stroke-width="1.700000"><path d="M265.300000,11.500000 A5.300000,5.300000 0 0 1 275,9.500000"/><path d="M275.700000,13.800000 A5.300000,5.300000 0 0 1 266,15.800000"/></g><path d="M276.500000,6 V11 H271.500000Z M264.500000,19.300000 V14.300000 H269.500000Z" fill="#444"/></svg>
<span class="t" style="left:75px;top:592px;font-size:11.300000px;color:#333;letter-spacing:-.1px">Page</span>
<div class="abs" style="left:100px;top:584px;width:52px;height:25px;border:1px solid #dcdcdc;background:#fff"><span class="t" style="left:10px;top:6px;font-size:12px;color:#2a7ab8">1</span></div>
<span class="t" style="left:154px;top:592px;font-size:11.500000px;color:#333">/1</span>
<span class="t" style="left:892px;top:591px;font-size:11px;color:#444">Display item: 1-2, Total: 2</span>
<div class="abs" style="left:1027px;top:590px;width:1px;height:14px;background:#999"></div>
<span class="t" style="left:1039px;top:592px;font-size:11px;color:#444">Show</span>
<span class="t" style="left:1077px;top:591px;font-size:12px;color:#1a78c2">10</span>
<svg class="abs" style="left:1103px;top:593px" width="9" height="6"><path d="M0,0 H8 L4,5Z" fill="#1a78c2"/></svg>
<span class="t" style="left:1123px;top:592px;font-size:11px;color:#444">Item(s)</span>
<div class="abs" style="left:0;top:615px;width:1168px;height:61px;background:#fafafa;border-top:1px solid #dedede"></div>
</div>

</div>

<svg class="abs" style="left:0;top:900px" width="1920" height="162" viewBox="0 900 1920 162" fill="none">
<defs><filter id="thin" x="-5%" y="-5%" width="110%" height="110%"><feMorphology operator="erode" radius="1"/></filter></defs>
<!-- trash -->
<g stroke="#fff" stroke-width="2.200000" stroke-linejoin="round"><path d="M36,916 H96"/><path d="M53,915 V911.500000 Q53,908.300000 56.500000,908.300000 H73.500000 Q77,908.300000 77,911.500000 V915"/><path d="M40.500000,922 L42.500000,976 Q42.700000,979.600000 46.500000,979.600000 H85.500000 Q89.300000,979.600000 89.500000,976 L91.500000,922Z"/></g>
<!-- page dots -->
<circle cx="920.400000" cy="997.400000" r="4.500000" fill="#fff"/><circle cx="961.400000" cy="997.400000" r="4.500000" fill="#fff" fill-opacity=".38"/><circle cx="1002.500000" cy="997.400000" r="4.500000" fill="#fff" fill-opacity=".38"/>
<!-- bottom round icons -->
<g stroke="#fff" stroke-opacity=".8" stroke-width="1.800000"><circle cx="922.200000" cy="1036.700000" r="13"/><circle cx="960" cy="1036.700000" r="13"/><circle cx="999.400000" cy="1036.700000" r="13"/>
<path d="M918.500000,1042 H917.500000 A3.500000,3.500 0 0 1 917,1035.200000 A5,5 0 0 1 926.500000,1034 A4,4 0 0 1 927.500000,1042 H922.500000 A2.800000,2.800000 0 1 1 925,1037.500000" stroke-width="1.400000"/>
<path d="M952.500000,1033.500000 L960,1028 L963,1032 L960.500000,1034 L967.500000,1043.500000 L965,1045.500000 L958,1036 L955.500000,1037.700000Z" stroke-width="1.300000"/>
<path d="M994,1030.500000 H998.600000 V1041.500000 H994Z M1000.200000,1030.500000 H1004.800000 V1041.500000 H1000.200000Z M992.500000,1032 V1043.300000 H998.200000 L999.400000,1044.200000 L1000.600000,1043.300000 H1006.300000 V1032" stroke-width="1.300000"/></g>
</svg>
<span class="t" id="quts" style="left:40.5px;top:1012.5px;font-size:42px;font-weight:bold;color:#fff;opacity:.53;-webkit-text-stroke:.7px #fff;transform:scaleX(.862);transform-origin:0 0">QuTS</span>
<span class="t" id="hero" style="left:143px;top:1019px;font-size:20px;font-weight:bold;color:#3f1c66;-webkit-text-stroke:2.400000px #a591c3;paint-order:stroke fill;letter-spacing:-1px">hero</span>
<span class="t" id="clock" style="left:1758px;top:963px;font-size:56px;color:#fff;filter:url(#thin);letter-spacing:-2.1px">23:45</span>
<span class="t" id="date" style="left:1722.5px;top:1027px;font-size:20px;color:#fff;text-shadow:0 1px 2px rgba(0,0,0,.4);letter-spacing:.16px">2026/03/27 Friday</span>

</body>
</html>
